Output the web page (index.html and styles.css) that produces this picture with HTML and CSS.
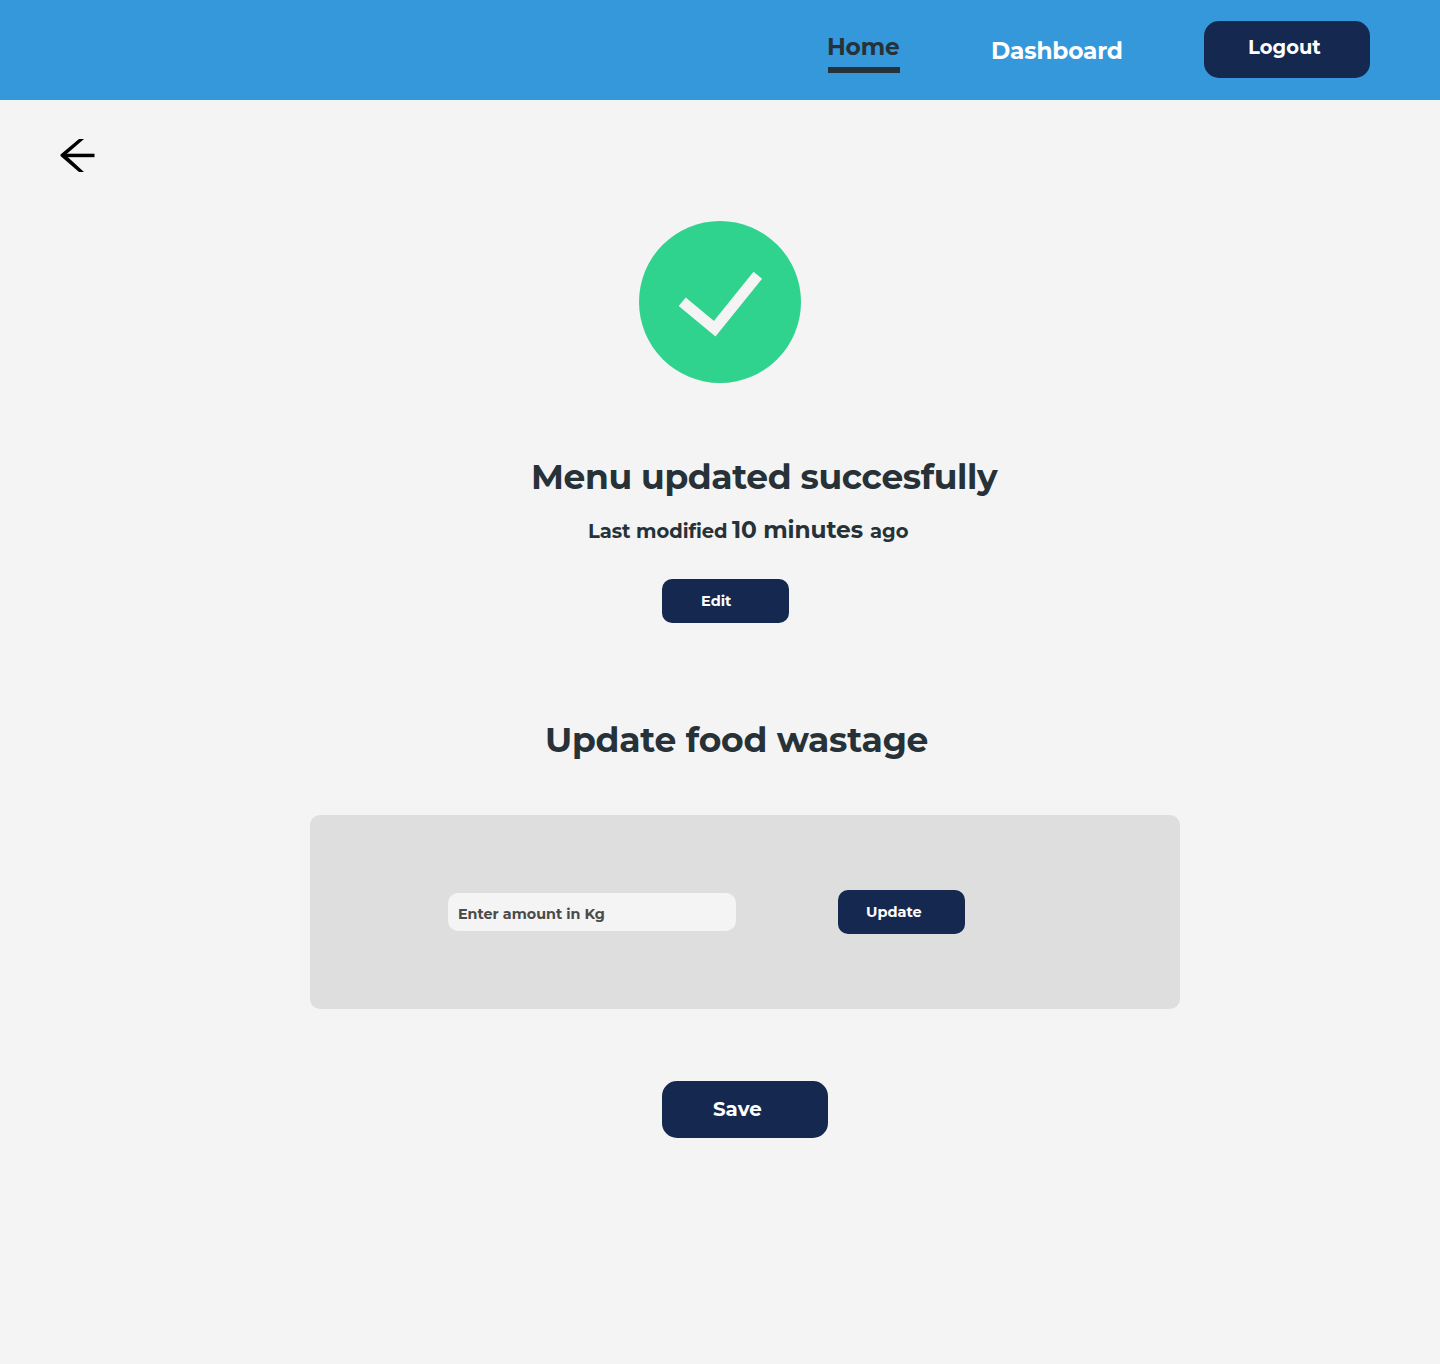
FILE: index.html
```html
<!DOCTYPE html>
<html lang="en">
<head>
<meta charset="utf-8">
<title>Menu updated</title>
<link rel="stylesheet" href="styles.css">
</head>
<body>
<header class="topbar">
  <nav class="nav">
    <a class="nav-home"><span class="home-label">Home</span></a>
    <a class="nav-dashboard">Dashboard</a>
  </nav>
  <button class="btn btn-large btn-logout">Logout</button>
</header>
<main class="page">
  <a class="back" aria-label="Back">
    <svg width="36" height="34" viewBox="0 0 36 34"><path d="M19 1h5L5.500 17 24 34h-5L.5 18v-1.400Z"/><path d="M4 15.700h30.500v3.500H4Z"/></svg>
  </a>
  <svg class="success" width="162" height="162" viewBox="0 0 162 162"><circle cx="81" cy="81" r="81" fill="#2fd38e"/><path d="M43.200 80.800 75.700 107.800 118.800 54.200" fill="none" stroke="#f4f4f4" stroke-width="11"/></svg>
  <h1 class="title title-menu">Menu updated succesfully</h1>
  <p class="modified"><span class="mod-label">Last modified</span><strong class="mod-time">10 minutes</strong><span class="mod-ago">ago</span></p>
  <button class="btn btn-small btn-edit">Edit</button>
  <h2 class="title title-waste">Update food wastage</h2>
  <form class="panel">
    <input class="amount" type="text" placeholder="Enter amount in Kg">
    <button type="button" class="btn btn-small btn-update">Update</button>
  </form>
  <button class="btn btn-large btn-save">Save</button>
</main>
</body>
</html>
```
FILE: styles.css
```css
* { box-sizing: border-box; }
body {
  margin: 0;
  min-height: 1364px;
  background: #f4f4f4;
  color: #263238;
  font-family: Montserrat, Inter, sans-serif;
  font-weight: 700;
}
.topbar {
  display: flex;
  align-items: flex-start;
  height: 100px;
  padding: 21px 70px 0 827px;
  background: #3498db;
}
.nav { display: flex; width: 377px; font-size: 23.3px; line-height: 30px; letter-spacing: -0.2px; white-space: nowrap; }
.nav-home { width: 73px; margin: 11px 91px 0 0; }
.home-label { display: block; height: 41px; margin-left: 1px; border-bottom: 6px solid #263238; text-indent: -1px; }
.nav-dashboard { margin-top: 15px; color: #fff; }
.btn {
  display: block;
  border: 0;
  background: #152850;
  color: #fff;
  font-family: inherit;
  font-weight: 700;
  text-align: left;
  white-space: nowrap;
}
.btn-large { width: 166px; height: 57px; border-radius: 15px; font-size: 19.5px; line-height: 24px; }
.btn-small { width: 127px; height: 44px; border-radius: 10px; font-size: 14.5px; line-height: 20px; }
.btn-logout { padding: 0 0 5px 44px; }
.page { display: flex; flex-direction: column; align-items: flex-start; }
.back { display: block; height: 34px; margin: 38px 0 0 60px; }
.back svg { display: block; }
.success { margin: 49px 0 0 639px; }
.title { margin: 0; font-size: 34.5px; font-weight: 700; line-height: 44px; white-space: nowrap; }
.title-menu { margin: 72px 0 0 531px; letter-spacing: -0.38px; }
.modified { display: flex; align-items: baseline; height: 30px; margin: 16px 0 0 588px; font-size: 19.5px; line-height: 30px; white-space: nowrap; }
.mod-label { width: 144px; letter-spacing: -0.05px; }
.mod-time { width: 138px; font-size: 23.3px; font-weight: 700; letter-spacing: -0.1px; }
.btn-edit { margin: 34px 0 0 662px; padding: 0 0 0 39px; }
.title-waste { margin: 95px 0 0 545px; letter-spacing: -0.2px; }
.panel {
  display: flex;
  align-items: center;
  width: 870px;
  height: 194px;
  margin: 53px 0 0 310px;
  padding-left: 138px;
  border-radius: 10px;
  background: #dedede;
}
.amount {
  width: 288px;
  height: 38px;
  padding: 4px 10px 0;
  border: 0;
  border-radius: 10px;
  background: #f4f4f4;
  font: 700 14.35px/20px Montserrat, Inter, sans-serif;
}
.amount::placeholder { color: #4a4a4a; opacity: 1; }
.btn-update { margin-left: 102px; padding: 0 0 0 28px; }
.btn-save { margin: 72px 0 0 662px; padding: 0 0 1px 51px; font-size: 19.8px; }
```
